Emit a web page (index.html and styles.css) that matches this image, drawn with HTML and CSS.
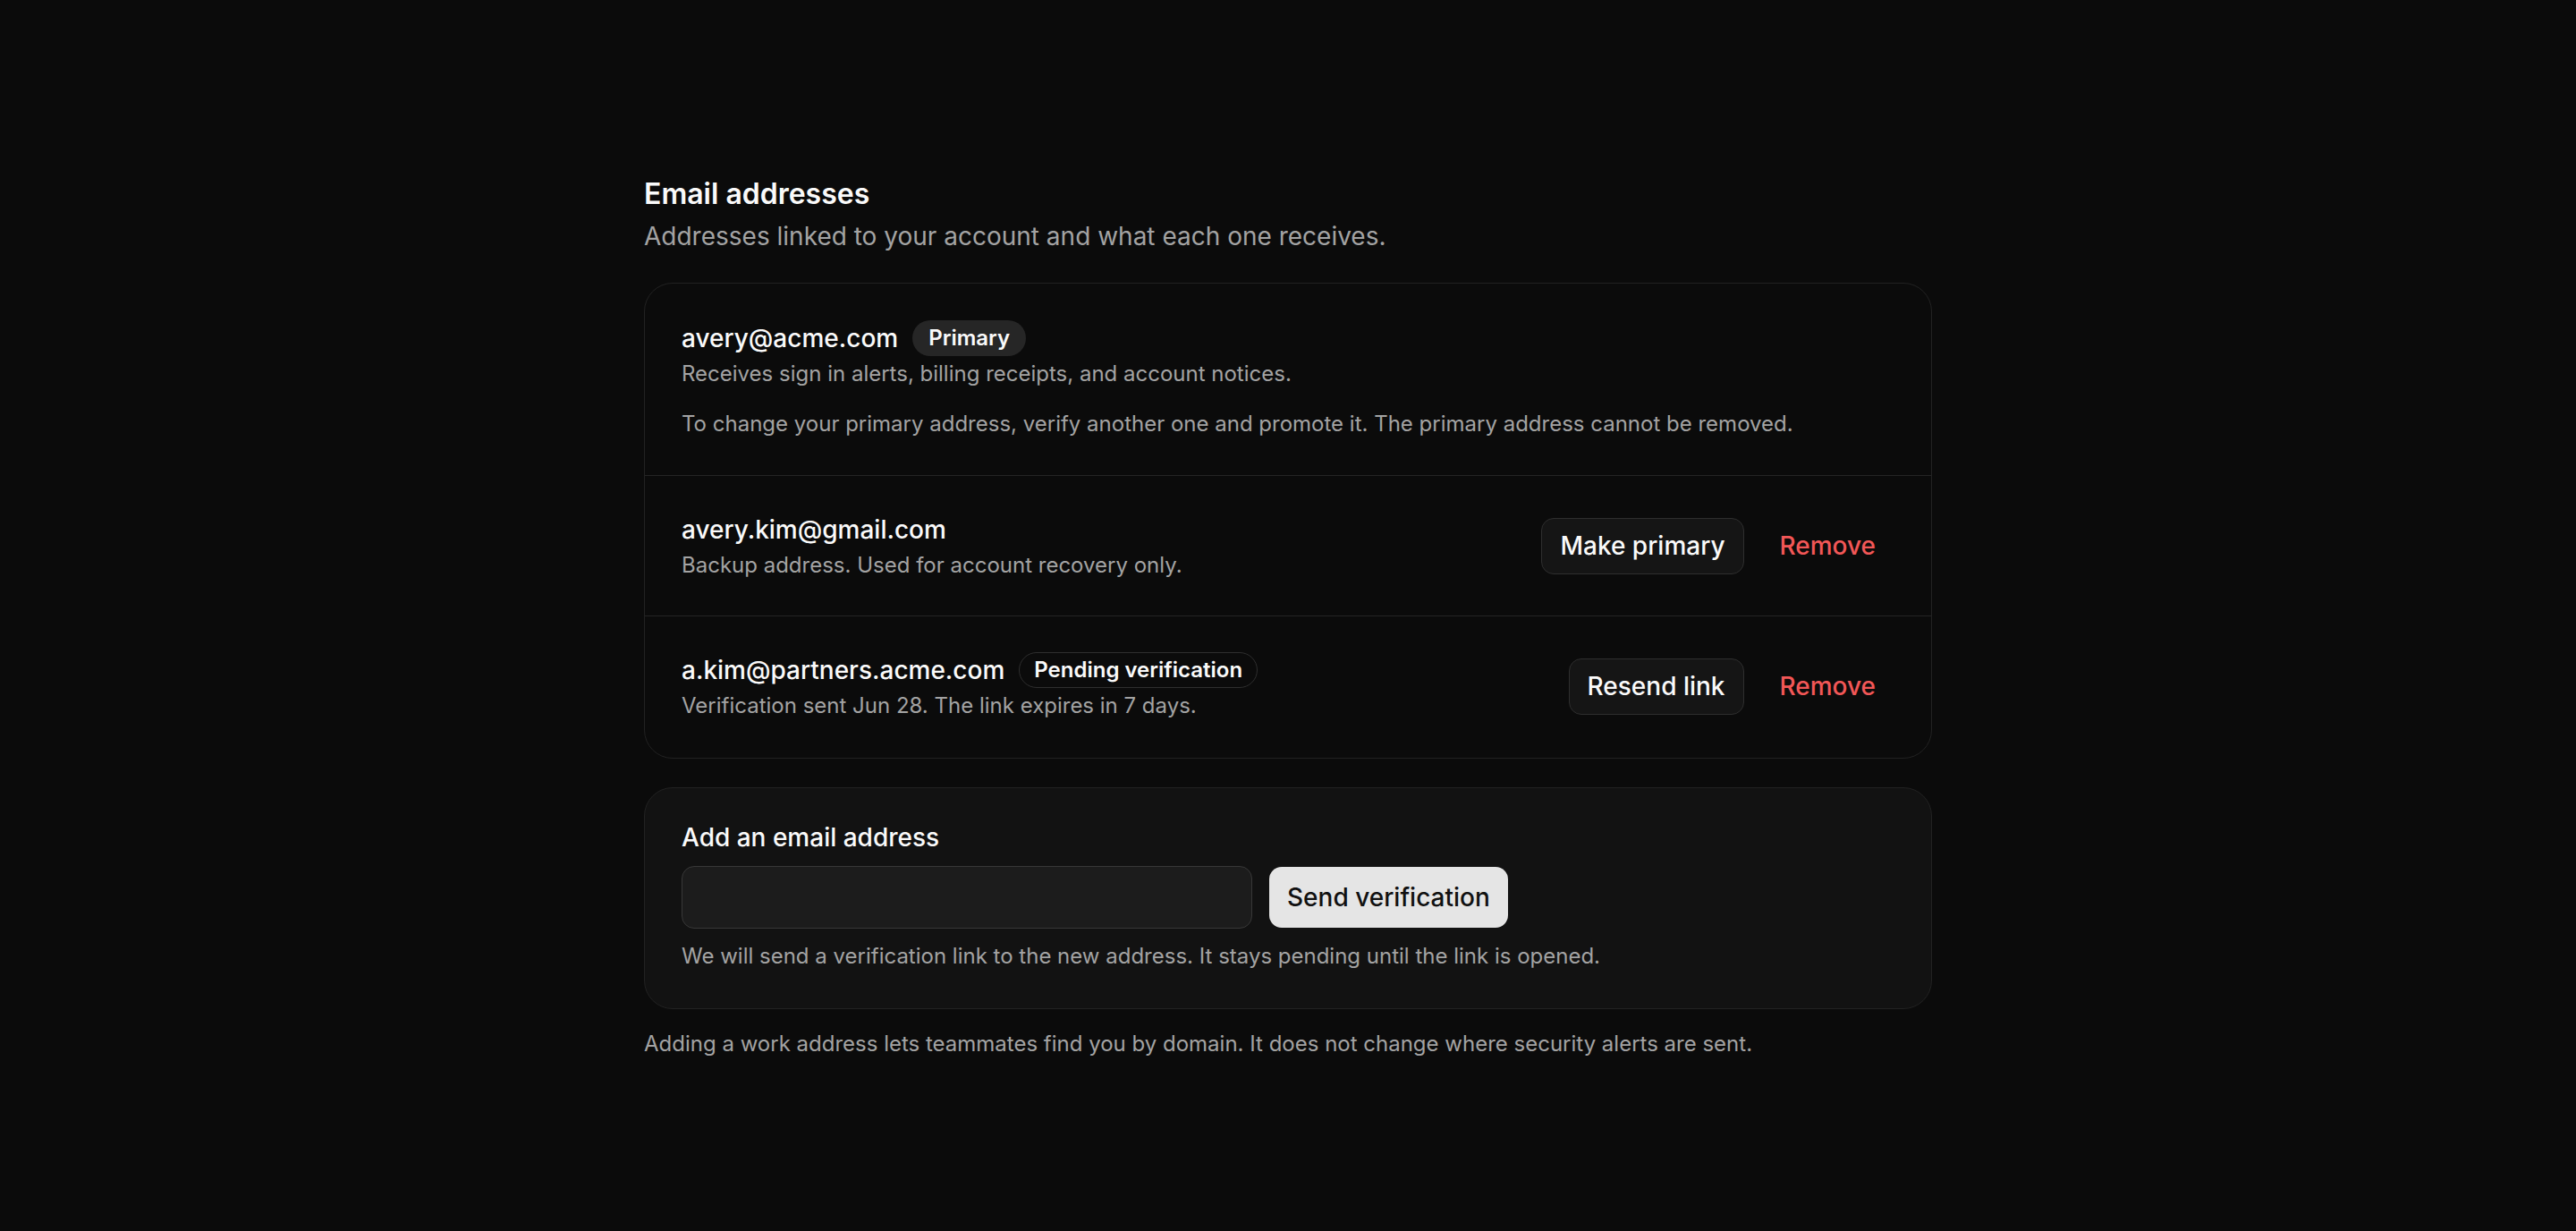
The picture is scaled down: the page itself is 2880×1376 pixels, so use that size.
FILE: index.html
```html
<!DOCTYPE html>
<html lang="en">
<head>
    <meta charset="UTF-8">
    <meta name="viewport" content="width=device-width, initial-scale=1.0">
    <title>Email addresses</title>
    <link rel="stylesheet" href="styles.css">
</head>
<body>
    <main class="page">
        <header class="section-head">
            <h1>Email addresses</h1>
            <p>Addresses linked to your account and what each one receives.</p>
        </header>

        <div class="email-list">
            <div class="email-row">
                <div class="email-info">
                    <div class="email-line">
                        <span class="email">avery@acme.com</span>
                        <span class="badge badge-primary">Primary</span>
                    </div>
                    <p class="email-desc">Receives sign in alerts, billing receipts, and account notices.</p>
                    <p class="email-desc email-note">To change your primary address, verify another one and promote it. The primary address cannot be removed.</p>
                </div>
            </div>
            <div class="email-row">
                <div class="email-info">
                    <div class="email-line">
                        <span class="email">avery.kim@gmail.com</span>
                    </div>
                    <p class="email-desc">Backup address. Used for account recovery only.</p>
                </div>
                <div class="actions">
                    <button class="btn">Make primary</button>
                    <button class="btn-remove">Remove</button>
                </div>
            </div>
            <div class="email-row">
                <div class="email-info">
                    <div class="email-line">
                        <span class="email">a.kim@partners.acme.com</span>
                        <span class="badge badge-pending">Pending verification</span>
                    </div>
                    <p class="email-desc">Verification sent Jun 28. The link expires in 7 days.</p>
                </div>
                <div class="actions">
                    <button class="btn">Resend link</button>
                    <button class="btn-remove">Remove</button>
                </div>
            </div>
        </div>

        <form class="add-card" onsubmit="return false">
            <label class="add-title" for="newEmail">Add an email address</label>
            <div class="add-row">
                <input type="email" id="newEmail" class="add-input">
                <button type="submit" class="btn-send">Send verification</button>
            </div>
            <p class="email-desc add-help">We will send a verification link to the new address. It stays pending until the link is opened.</p>
        </form>

        <p class="footnote">Adding a work address lets teammates find you by domain. It does not change where security alerts are sent.</p>
    </main>
</body>
</html>
```

FILE: styles.css
```css
* {
    box-sizing: border-box;
}
body {
    margin: 0;
    background: #0b0b0b;
    color: #f5f5f5;
    font-family: Inter, "Noto Sans", sans-serif;
}
.page {
    width: 1440px;
    margin: 0 auto;
    padding-top: 197px;
}
.section-head h1 {
    margin: 0 0 9px;
    font-size: 32px;
    line-height: 40px;
    font-weight: 600;
    color: #fafafa;
}
.section-head p {
    margin: 0 0 34px;
    font-size: 28px;
    line-height: 36px;
    color: #a3a3a3;
}
.email-list {
    border: 1px solid #222;
    border-radius: 32px;
    background: #0b0b0b;
}
.email-row {
    display: flex;
    justify-content: space-between;
    align-items: center;
    padding: 40px 40px 40px 41px;
    border-top: 1px solid #242424;
}
.email-row:first-child {
    border-top: none;
    padding-top: 41px;
    padding-bottom: 41px;
}
.email-row:last-child {
    padding-bottom: 42px;
}
.email-line {
    display: flex;
    align-items: center;
    gap: 16px;
    height: 40px;
}
.email {
    font-size: 28px;
    font-weight: 500;
    color: #fafafa;
}
.email-desc {
    margin: 4px 0 0;
    font-size: 24px;
    line-height: 32px;
    color: #a3a3a3;
}
.email-note {
    margin-top: 24px;
}
.badge {
    font-size: 24px;
    line-height: 32px;
    font-weight: 600;
    border-radius: 20px;
    color: #fafafa;
}
.badge-primary {
    background: #262626;
    padding: 4px 18px;
}
.badge-pending {
    border: 1px solid #2e2e2e;
    padding: 3px 16px;
}
.actions {
    display: flex;
    align-items: center;
    gap: 18px;
}
.btn {
    font-family: inherit;
    font-size: 28px;
    font-weight: 500;
    line-height: 39px;
    padding: 11px 20px;
    color: #fafafa;
    background: #151515;
    border: 1px solid #2e2e2e;
    border-radius: 14px;
    cursor: pointer;
}
.btn-remove {
    font-family: inherit;
    font-size: 28px;
    font-weight: 500;
    line-height: 39px;
    padding: 12px 22px;
    color: #f25757;
    background: none;
    border: none;
    cursor: pointer;
}
.add-card {
    margin-top: 32px;
    padding: 37px 40px 42px 41px;
    background: #121212;
    border: 1px solid #222;
    border-radius: 32px;
}
.add-title {
    display: block;
    font-size: 28px;
    line-height: 36px;
    font-weight: 500;
    color: #fafafa;
    margin-bottom: 14px;
}
.add-row {
    display: flex;
    align-items: center;
    gap: 19px;
}
.add-input {
    width: 638px;
    height: 70px;
    background: #1c1c1c;
    border: 1px solid #383838;
    border-radius: 14px;
    color: #fafafa;
    font-family: inherit;
    font-size: 26px;
    padding: 0 20px;
}
.btn-send {
    font-family: inherit;
    font-size: 28px;
    font-weight: 500;
    line-height: 40px;
    padding: 14px 20px;
    color: #111;
    background: #e5e5e5;
    border: none;
    border-radius: 14px;
    cursor: pointer;
}
.add-help {
    margin-top: 15px;
}
.footnote {
    margin: 23px 0 0;
    font-size: 24px;
    line-height: 32px;
    color: #a3a3a3;
}
```
